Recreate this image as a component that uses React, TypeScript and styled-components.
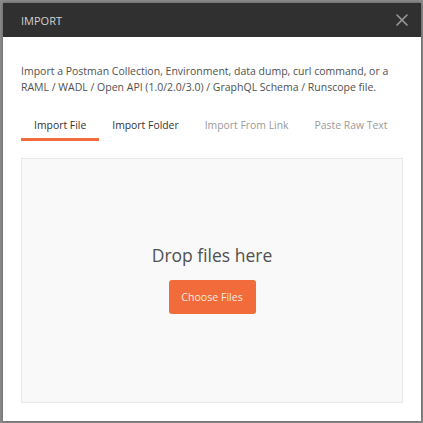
import React from "react";
import styled, { createGlobalStyle } from "styled-components";

const Global = createGlobalStyle`
  html, body { margin: 0; padding: 0; background: #8a8a8a; }
  * { box-sizing: border-box; }
  body { font-family: "Open Sans", "Noto Sans", sans-serif; }
`;

const Backdrop = styled.div`
  width: 423px;
  height: 423px;
  padding: 3px 2px 2px 3px;
  background: #8a8a8a;
`;

const Modal = styled.div`
  width: 418px;
  height: 418px;
  background: #fff;
  display: flex;
  flex-direction: column;
  box-shadow: 0 0 3px rgba(0, 0, 0, 0.35);
`;

const Header = styled.div`
  height: 34px;
  flex: none;
  background: #303030;
  display: flex;
  align-items: center;
  justify-content: space-between;
  padding: 0 12px 0 18px;
`;

const Title = styled.span`
  color: #d0d0d0;
  font-size: 11px;
`;

const Close = styled.button`
  border: 0;
  background: none;
  padding: 0;
  width: 14px;
  height: 14px;
  display: flex;
  align-items: center;
  justify-content: center;
  cursor: pointer;
`;

const Body = styled.div`
  flex: 1;
  display: flex;
  flex-direction: column;
  padding: 26px 18px 18px 18px;
`;

const Description = styled.p`
  margin: 0;
  font-size: 10.5px;
  line-height: 16px;
  color: #505050;
`;

const Tabs = styled.div`
  display: flex;
  margin-top: 22px;
`;

const Tab = styled.div<{ $active?: boolean; $muted?: boolean }>`
  flex: none;
  white-space: nowrap;
  padding: 0 13px 5px;
  font-size: 10.4px;
  line-height: 16px;
  color: ${(p) => (p.$muted ? "#9a9a9a" : "#333")};
  border-bottom: 3px solid ${(p) => (p.$active ? "#f26b3a" : "transparent")};
  cursor: pointer;
`;

const DropArea = styled.div`
  margin-top: 17px;
  flex: 1;
  background: #f9f9f9;
  border: 1px solid #e8e8e8;
  display: flex;
  flex-direction: column;
  align-items: center;
  justify-content: center;
  gap: 13px;
  padding-bottom: 4px;
`;

const DropText = styled.div`
  font-size: 17.5px;
  line-height: 24px;
  color: #505050;
`;

const ChooseButton = styled.button`
  width: 87px;
  height: 34px;
  border: 0;
  border-radius: 3px;
  background: #f26b3a;
  color: #fde8df;
  font-family: "Open Sans", "Noto Sans", sans-serif;
  font-size: 10.6px;
  cursor: pointer;
`;

export default function App() {
  return (
    <>
      <Global />
      <Backdrop>
        <Modal>
          <Header>
            <Title>IMPORT</Title>
            <Close aria-label="Close">
              <svg width="12" height="12" viewBox="0 0 12 12">
                <path d="M1 1 L11 11 M11 1 L1 11" stroke="#9a9a9a" strokeWidth="1.6" strokeLinecap="round" />
              </svg>
            </Close>
          </Header>
          <Body>
            <Description>
              Import a Postman Collection, Environment, data dump, curl command, or a RAML / WADL / Open API
              (1.0/2.0/3.0) / GraphQL Schema / Runscope file.
            </Description>
            <Tabs>
              <Tab $active>Import File</Tab>
              <Tab>Import Folder</Tab>
              <Tab $muted>Import From Link</Tab>
              <Tab $muted>Paste Raw Text</Tab>
            </Tabs>
            <DropArea>
              <DropText>Drop files here</DropText>
              <ChooseButton>Choose Files</ChooseButton>
            </DropArea>
          </Body>
        </Modal>
      </Backdrop>
    </>
  );
}
